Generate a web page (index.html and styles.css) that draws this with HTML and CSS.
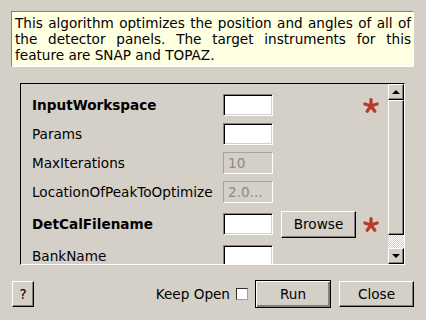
FILE: index.html
```html
<!DOCTYPE html>
<html lang="en">
<head>
  <meta charset="UTF-8" />
  <title>OptimizeDetector - Algorithm Dialog</title>
  <link rel="stylesheet" href="styles.css">
</head>
<body>
  <div class="dialog">
    <div class="description">
      <div class="line">This algorithm optimizes the position and angles of all of</div>
      <div class="line">the detector panels. The target instruments for this</div>
      <div class="line last">feature are SNAP and TOPAZ.</div>
    </div>

    <div class="panel">
      <div class="props">
        <label class="name required">InputWorkspace</label>
        <input class="field" type="text" />
        <span class="star">
          <svg viewBox="0 0 16 15" width="16" height="15"><path d="M8 8V1.6M8 8l6.1-2M8 8l3.8 5.2M8 8l-3.8 5.2M8 8L1.9 6" /></svg>
        </span>

        <label class="name">Params</label>
        <input class="field" type="text" />

        <label class="name">MaxIterations</label>
        <input class="field" type="text" value="10" disabled />

        <label class="name">LocationOfPeakToOptimize</label>
        <input class="field" type="text" value="2.0..." disabled />

        <label class="name required">DetCalFilename</label>
        <input class="field" type="text" />
        <button class="btn browse" type="button">Browse</button>
        <span class="star">
          <svg viewBox="0 0 16 15" width="16" height="15"><path d="M8 8V1.6M8 8l6.1-2M8 8l3.8 5.2M8 8l-3.8 5.2M8 8L1.9 6" /></svg>
        </span>

        <label class="name">BankName</label>
        <input class="field" type="text" />
      </div>

      <div class="scrollbar">
        <div class="arrow up"></div>
        <div class="handle"></div>
        <div class="track"></div>
        <div class="arrow down"></div>
      </div>
    </div>

    <div class="footer">
      <button class="btn help" type="button">?</button>
      <label class="keep">Keep Open <span class="check"></span></label>
      <button class="btn run" type="button">Run</button>
      <button class="btn close" type="button">Close</button>
    </div>
  </div>
</body>
</html>
```

FILE: styles.css
```css
* {
  box-sizing: border-box;
}
body {
  margin: 0;
  background: #d4d0c8;
  font-family: 'DejaVu Sans', sans-serif;
  font-size: 13.6px;
  color: #000;
}
.dialog {
  width: 426px;
  height: 320px;
  padding-top: 11px;
}
.description {
  margin-left: 11px;
  width: 403px;
  height: 56px;
  border: 1px solid;
  border-color: #808080 #fff #fff #808080;
  background: #ffffe1;
  padding: 3px 2px 0 3px;
  line-height: 16px;
}
.line {
  text-align: justify;
  text-align-last: justify;
}
.line.last {
  text-align-last: left;
}
.panel {
  margin: 16px 0 0 20px;
  width: 385px;
  height: 182px;
  border: 1px solid;
  border-color: #000 #fff #fff #000;
  display: flex;
}
.props {
  flex: 1;
  overflow: hidden;
  padding: 10px 0 0 11px;
  display: grid;
  grid-template-columns: 191px 58px 82px 16px;
  grid-template-rows: 22px 22px 22px 22px 28px 22px;
  row-gap: 7px;
  align-items: center;
  align-content: start;
}
.name {
  grid-column: 1;
  white-space: nowrap;
}
.name.required {
  font-weight: bold;
}
.field {
  grid-column: 2;
  width: 50px;
  height: 22px;
  margin: 0;
  padding: 0 4px;
  font: inherit;
  color: #000;
  background: #fff;
  border: 1px solid;
  border-color: #808080 #fff #fff #808080;
  box-shadow: inset 1px 1px #000, inset -1px -1px #d4d0c8;
  outline: none;
}
.field:disabled {
  background: #d4d0c8;
  color: #8c8a86;
  -webkit-text-fill-color: #8c8a86;
  border-color: #a6a39c #fff #fff #a6a39c;
  box-shadow: none;
}
.btn {
  margin: 0;
  padding: 0;
  font: inherit;
  color: #000;
  background: #d4d0c8;
  border: 1px solid;
  border-color: #fff #000 #000 #fff;
  box-shadow: inset -1px -1px #808080;
}
.browse {
  grid-column: 3;
  width: 75px;
  height: 27px;
}
.star {
  grid-column: 4;
  display: flex;
  width: 16px;
  height: 15px;
}
.star path {
  fill: none;
  stroke: #b9392b;
  stroke-width: 3.2;
  stroke-linecap: round;
}
.scrollbar {
  width: 16px;
  display: flex;
  flex-direction: column;
}
.arrow, .handle {
  border: 1px solid;
  border-color: #fff #000 #000 #fff;
  box-shadow: inset -1px -1px #808080;
  background: #d4d0c8;
}
.arrow {
  height: 16px;
  display: flex;
  align-items: center;
  justify-content: center;
}
.arrow:after {
  content: '';
  border-left: 4px solid transparent;
  border-right: 4px solid transparent;
}
.arrow.up:after {
  border-bottom: 4px solid #000;
}
.arrow.down:after {
  border-top: 4px solid #000;
}
.handle {
  flex: 1;
}
.track {
  height: 13px;
  background: repeating-conic-gradient(#fff 0 25%, #d4d0c8 0 50%) 0 0 / 2px 2px;
}
.footer {
  margin-top: 15px;
  padding: 0 12px;
  height: 28px;
  display: flex;
  align-items: center;
}
.help {
  width: 22px;
  height: 26px;
}
.keep {
  margin-left: auto;
  display: flex;
  align-items: center;
  gap: 6px;
}
.check {
  width: 12px;
  height: 12px;
  background: #fff;
  border: 1px solid;
  border-color: #303030 #a0a0a0 #a0a0a0 #303030;
}
.run {
  margin-left: 7px;
  width: 76px;
  height: 28px;
  border-color: #000;
  box-shadow: inset 1px 1px #fff, inset -2px -2px #808080;
}
.close {
  margin-left: 8px;
  width: 75px;
  height: 26px;
}
```
